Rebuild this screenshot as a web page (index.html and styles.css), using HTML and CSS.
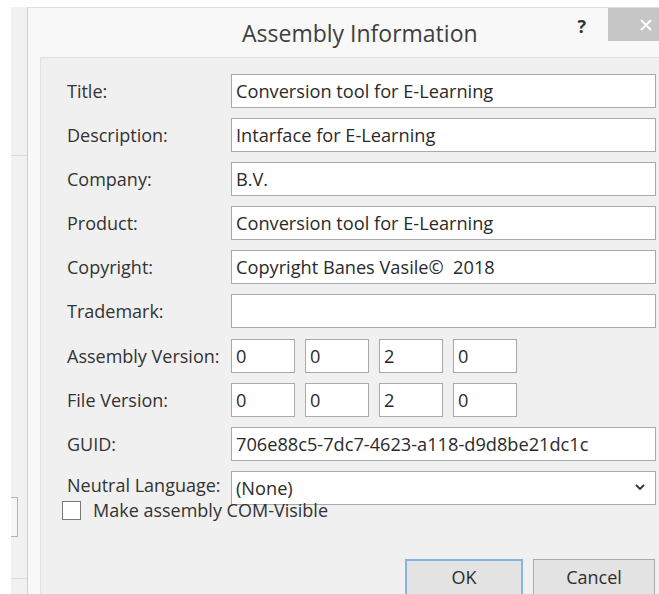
FILE: index.html
```html
<!DOCTYPE html>
<html lang="en">
<head>
<meta charset="utf-8">
<title>Assembly Information</title>
<link rel="stylesheet" href="styles.css">
</head>
<body>
<div class="screen">
  <div class="backdrop">
    <div class="bd-rule bd-rule-top"></div>
    <div class="bd-button"></div>
    <div class="bd-rule bd-rule-bottom"></div>
  </div>

  <div class="dialog">
    <div class="titlebar">
      <span class="title">Assembly Information</span>
      <span class="help">?</span>
      <span class="close">
        <svg width="14" height="14" viewBox="0 0 14 14">
          <path d="M2 2 L12 12 M12 2 L2 12" stroke="#ffffff" stroke-width="2" fill="none"/>
        </svg>
      </span>
    </div>

    <div class="client">
      <div class="form">
        <span class="label">Title:</span>
        <div class="field">Conversion tool for E-Learning</div>

        <span class="label">Description:</span>
        <div class="field">Intarface for E-Learning</div>

        <span class="label">Company:</span>
        <div class="field">B.V.</div>

        <span class="label">Product:</span>
        <div class="field">Conversion tool for E-Learning</div>

        <span class="label">Copyright:</span>
        <div class="field">Copyright Banes Vasile©&nbsp; 2018</div>

        <span class="label">Trademark:</span>
        <div class="field"></div>

        <span class="label">Assembly Version:</span>
        <div class="versions">
          <div class="field part">0</div>
          <div class="field part">0</div>
          <div class="field part">2</div>
          <div class="field part">0</div>
        </div>

        <span class="label">File Version:</span>
        <div class="versions">
          <div class="field part">0</div>
          <div class="field part">0</div>
          <div class="field part">2</div>
          <div class="field part">0</div>
        </div>

        <span class="label">GUID:</span>
        <div class="field">706e88c5-7dc7-4623-a118-d9d8be21dc1c</div>

        <span class="label label-raised">Neutral Language:</span>
        <div class="field combo">
          <span>(None)</span>
          <svg class="chevron" width="10" height="7" viewBox="0 0 10 7">
            <path d="M1 1 L5 5 L9 1" stroke="#333333" stroke-width="1.8" fill="none"/>
          </svg>
        </div>
      </div>

      <div class="checkrow">
        <span class="checkbox"></span>
        <span class="check-label">Make assembly COM-Visible</span>
      </div>

      <div class="buttons">
        <button class="btn btn-default">OK</button>
        <button class="btn btn-cancel">Cancel</button>
      </div>
    </div>
  </div>
</div>
</body>
</html>
```

FILE: styles.css
```css
html, body {
  margin: 0;
  padding: 0;
  background: #ffffff;
}

body {
  width: 659px;
  height: 594px;
  overflow: hidden;
  font-family: "Open Sans", "Noto Sans", sans-serif;
  color: #2e2e2e;
}

.screen {
  display: flex;
  height: 594px;
  padding-top: 7px;
  box-sizing: border-box;
}

/* window sitting behind the dialog */
.backdrop {
  margin-left: 11px;
  width: 16px;
  flex: none;
  background: #f1f1f1;
  display: flex;
  flex-direction: column;
}

.bd-rule {
  height: 1px;
  background: #dcdcdc;
}

.bd-rule-top {
  margin-top: 148px;
}

.bd-button {
  margin-top: 341px;
  width: 6px;
  height: 38px;
  border: 1px solid #b3b3b3;
  border-left: none;
  background: #f7f7f7;
}

.bd-rule-bottom {
  margin-top: 41px;
}

/* dialog frame */
.dialog {
  flex: 1;
  min-width: 0;
  border-left: 1px solid #cdcdcd;
  border-top: 1px solid #dedede;
  background: #f8f8f8;
  display: flex;
  flex-direction: column;
}

.titlebar {
  height: 49px;
  display: flex;
  align-items: center;
  flex: none;
}

.title {
  margin-left: 214px;
  font-size: 23px;
  color: #3f3f3f;
}

.help {
  margin-left: auto;
  align-self: flex-start;
  margin-top: 6px;
  font-size: 18px;
  font-weight: 700;
  color: #333333;
}

.close {
  align-self: flex-start;
  margin-left: 22px;
  width: 51px;
  height: 33px;
  box-sizing: border-box;
  padding-left: 31px;
  background: #c6c6c6;
  display: flex;
  align-items: center;
}

/* client area */
.client {
  flex: 1;
  margin-left: 12px;
  border-left: 1px solid #e2e2e2;
  border-top: 1px solid #e0e0e0;
  background: #f0f0f0;
  padding: 16px 0 0 26px;
}

.form {
  display: grid;
  grid-template-columns: 164px 425px;
  grid-auto-rows: 34px;
  row-gap: 10.1px;
}

.label {
  align-self: center;
  font-size: 18px;
  line-height: 20px;
  color: #333333;
}

.label-raised {
  padding-bottom: 6px;
}

.field {
  box-sizing: border-box;
  height: 34px;
  border: 1px solid #a9a9a9;
  background: #ffffff;
  padding: 0 4px;
  display: flex;
  align-items: center;
  font-size: 18.2px;
  line-height: 20px;
  color: #2a2a2a;
  white-space: nowrap;
}

.versions {
  display: flex;
  gap: 10px;
}

.field.part {
  width: 64px;
}

.combo {
  justify-content: space-between;
  padding-right: 10px;
}

.checkrow {
  display: flex;
  align-items: center;
  gap: 12px;
  margin: -4px 0 0 -5px;
  height: 19px;
}

.checkbox {
  box-sizing: border-box;
  width: 19px;
  height: 19px;
  border: 1px solid #7a7a7a;
  background: #ffffff;
}

.check-label {
  font-size: 18px;
  line-height: 19px;
  color: #333333;
}

.buttons {
  display: flex;
  gap: 10px;
  margin-top: 39px;
  padding-left: 338px;
}

.btn {
  box-sizing: border-box;
  height: 37px;
  font-family: "Open Sans", "Noto Sans", sans-serif;
  font-size: 18px;
  color: #2e2e2e;
  background: #e3e3e3;
  border: 1px solid #acacac;
  padding: 0;
}

.btn-default {
  width: 118px;
  border: 2px solid #86b5e3;
}

.btn-cancel {
  width: 122px;
}
```
